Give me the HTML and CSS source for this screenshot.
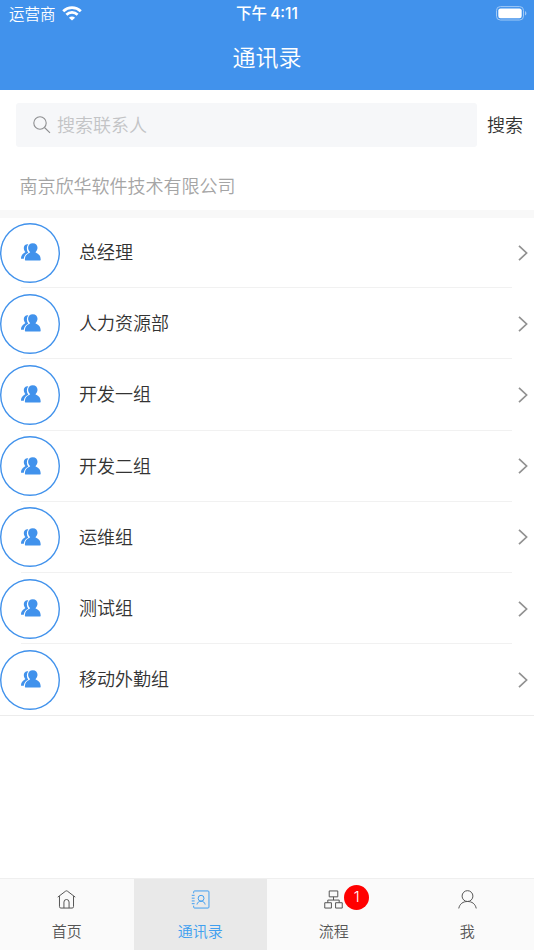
FILE: index.html
```html
<!DOCTYPE html>
<html lang="zh-CN">
<head>
    <meta charset="UTF-8">
    <meta name="viewport" content="width=device-width, initial-scale=1.0">
    <title>通讯录</title>
    <link rel="stylesheet" href="styles.css">
</head>
<body>
    <!-- 图标 -->
    <svg class="sprite">
        <symbol id="icon-group" viewBox="0 0 20 18">
            <path d="M7.300 1.300C4.300 1 2.700 2.900 2.800 5.200c.1 2 .9 3 1.600 3.900C3 10.700 0 11.200 0 15.700h2.800c.3-2.900 1.900-4.700 4.500-5.900C5.500 7.400 5.300 3.800 7.300 1.300z"/>
            <path d="M11.800.2c2.900 0 4.700 2 4.700 4.600 0 1.900-.9 3.500-2.100 4.400 1.900 1.300 5.300 2.100 5.300 7.600 0 .4-.2.600-.6.600H4.500c-.4 0-.6-.2-.6-.6 0-5.500 3.500-6.300 5.300-7.600C8 8.300 7.100 6.700 7.100 4.800c0-2.600 1.800-4.600 4.700-4.600z"/>
        </symbol>
        <symbol id="icon-arrow" viewBox="0 0 10 16">
            <path d="M1 .8 8.600 8 1 15.200"/>
        </symbol>
    </svg>

    <header class="cabecera">
        <div class="status-bar">
            <div class="carrier">
                <span>运营商</span>
                <svg class="wifi" width="20" height="15" viewBox="0 0 20 15">
                    <path d="M1.200 5.200C6.200.5 13.800.5 18.800 5.200M4.400 8.700c3.200-3 8-3 11.200 0"/>
                    <path class="dot" d="M10 14.600 6.900 11.700c1.700-1.600 4.500-1.600 6.200 0z"/>
                </svg>
            </div>
            <div class="time">下午 4:11</div>
            <div class="battery">
                <svg width="32" height="15" viewBox="0 0 32 15">
                    <rect class="case" x="1.500" y=".6" width="27" height="13.400" rx="3.800"/>
                    <rect class="level" x="3.300" y="2.400" width="23.400" height="9.800" rx="2.200"/>
                    <path class="tip" d="M30 5c1.900.8 1.900 3.800 0 4.600z"/>
                </svg>
            </div>
        </div>
        <h1 class="title">通讯录</h1>
    </header>

    <main class="content">
        <div class="search">
            <div class="search-box">
                <svg width="18" height="18" viewBox="0 0 18 18">
                    <circle cx="7" cy="7" r="6.200"/>
                    <path d="m11.500 11.500 5.500 5.300"/>
                </svg>
                <span>搜索联系人</span>
            </div>
            <div class="search-btn">搜索</div>
        </div>
        <div class="company">南京欣华软件技术有限公司</div>

        <ul class="list">
            <li class="item">
                <div class="avatar"><svg><use href="#icon-group"/></svg></div>
                <span class="name">总经理</span>
                <svg class="arrow"><use href="#icon-arrow"/></svg>
            </li>
            <li class="item">
                <div class="avatar"><svg><use href="#icon-group"/></svg></div>
                <span class="name">人力资源部</span>
                <svg class="arrow"><use href="#icon-arrow"/></svg>
            </li>
            <li class="item">
                <div class="avatar"><svg><use href="#icon-group"/></svg></div>
                <span class="name">开发一组</span>
                <svg class="arrow"><use href="#icon-arrow"/></svg>
            </li>
            <li class="item">
                <div class="avatar"><svg><use href="#icon-group"/></svg></div>
                <span class="name">开发二组</span>
                <svg class="arrow"><use href="#icon-arrow"/></svg>
            </li>
            <li class="item">
                <div class="avatar"><svg><use href="#icon-group"/></svg></div>
                <span class="name">运维组</span>
                <svg class="arrow"><use href="#icon-arrow"/></svg>
            </li>
            <li class="item">
                <div class="avatar"><svg><use href="#icon-group"/></svg></div>
                <span class="name">测试组</span>
                <svg class="arrow"><use href="#icon-arrow"/></svg>
            </li>
            <li class="item">
                <div class="avatar"><svg><use href="#icon-group"/></svg></div>
                <span class="name">移动外勤组</span>
                <svg class="arrow"><use href="#icon-arrow"/></svg>
            </li>
        </ul>
    </main>

    <!-- 底部导航 -->
    <nav class="tabs">
        <div class="tab">
            <svg viewBox="0 0 20 20">
                <path d="M.8 7.500 8.900 1.300q1.100-.8 2.200 0l8.100 6.200M2.600 6.400v11.100q0 1.500 1.500 1.500h11.800q1.500 0 1.500-1.500V6.400M7.300 19v-6.300a2.700 2.700 0 0 1 5.400 0V19"/>
            </svg>
            <span>首页</span>
        </div>
        <div class="tab active">
            <svg viewBox="0 0 20 20">
                <path d="M2.800 3.500V2q0-1 1-1h14.100q1 0 1 1v16q0 1-1 1H3.800q-1 0-1-1v-1.500M.8 5.600h3M.8 8.600h3M.8 11.500h3M.8 14.400h3"/>
                <circle cx="10.600" cy="8.700" r="3.100"/>
                <path d="M6.300 15.300c.4-2.200 2-3.500 4.300-3.500s3.900 1.300 4.300 3.500"/>
            </svg>
            <span>通讯录</span>
        </div>
        <div class="tab">
            <div class="icon-wrap">
                <svg viewBox="0 0 20 20">
                    <path d="M5.500 1h9v6.200h-9zM10 7.200v3.400M4 13.400v-2.800h12v2.800M.8 13.400h7V19h-7zM12.200 13.400h7V19h-7z"/>
                </svg>
                <span class="badge">1</span>
            </div>
            <span>流程</span>
        </div>
        <div class="tab">
            <svg viewBox="0 0 20 20">
                <circle cx="10" cy="6.400" r="5.700"/>
                <path d="M.8 19.400C1.800 14.500 5.300 12.100 10 12.100s8.200 2.400 9.200 7.300"/>
            </svg>
            <span>我</span>
        </div>
    </nav>
</body>
</html>
```
FILE: styles.css
```css
* {
    box-sizing: border-box;
}
body {
    margin: 0;
    height: 950px;
    display: flex;
    flex-direction: column;
    font-family: "Noto Sans CJK SC", sans-serif;
    font-weight: 350;
    background-color: #fff;
    color: #333;
    overflow: hidden;
}
.sprite {
    display: none;
}

/* Cabecera */
.cabecera {
    height: 90px;
    background-color: #4192ec;
    color: #fff;
}
.status-bar {
    height: 27px;
    display: grid;
    grid-template-columns: 1fr auto 1fr;
    align-items: center;
    padding: 0 7px 0 9px;
    font-size: 15.500px;
    line-height: 27px;
}
.carrier {
    display: flex;
    align-items: center;
    gap: 6px;
}
.wifi {
    fill: none;
    stroke: #fff;
    stroke-width: 2.800;
}
.wifi .dot {
    fill: #fff;
    stroke: none;
}
.time {
    margin-right: 2px;
    font-family: Inter, "Noto Sans CJK SC", sans-serif;
    font-size: 15.500px;
    font-weight: 500;
    word-spacing: -1px;
}
.battery {
    display: flex;
    justify-content: flex-end;
}
.battery .case {
    fill: none;
    stroke: #a0c9f6;
}
.battery .level {
    fill: #fff;
}
.battery .tip {
    fill: #a0c9f6;
}
.title {
    margin: 0;
    padding-top: 12px;
    font-size: 23px;
    font-weight: 350;
    line-height: 34px;
    text-align: center;
}

/* Buscador */
.content {
    flex: 1;
}
.search {
    display: flex;
    align-items: center;
    padding: 13px 11px 0 16px;
}
.search-box {
    flex: 1;
    height: 44px;
    display: flex;
    align-items: center;
    gap: 6px;
    padding-left: 17px;
    border-radius: 3px;
    background-color: #f6f7f9;
    color: #c3c4c6;
    font-size: 18px;
}
.search-box span {
    padding-bottom: 2px;
}
.search-box svg {
    fill: none;
    stroke: #8d8e90;
    stroke-width: 1.100;
}
.search-btn {
    margin-left: 10px;
    padding-bottom: 3px;
    font-size: 18px;
}
.company {
    height: 63px;
    padding: 25px 19.500px 0;
    font-size: 18px;
    line-height: 27px;
    color: #a5a5a5;
}

/* Lista */
.list {
    margin: 0;
    padding: 0;
    list-style: none;
    border-top: 8px solid #f8f8f8;
    border-bottom: 1px solid #ececec;
}
.item {
    height: 71.200px;
    display: flex;
    align-items: center;
    padding: 0 6px 2px 0;
    background: linear-gradient(#f1f1f1, #f1f1f1) 21px calc(100% - 1px) / 491px 1px no-repeat;
}
.item:last-child {
    height: 69.500px;
    padding-bottom: 0;
    background: none;
}
.avatar {
    width: 60px;
    height: 60px;
    display: flex;
    align-items: center;
    justify-content: center;
    box-shadow: inset 0 0 0 1.400px #4192ec;
    border-radius: 50%;
}
.avatar svg {
    width: 20px;
    height: 18px;
    margin: -1px 0 0 1px;
    fill: #4192ec;
}
.name {
    flex: 1;
    margin-left: 19px;
    padding-bottom: 3px;
    font-size: 18px;
}
.arrow {
    width: 10px;
    height: 16px;
    fill: none;
    stroke: #919191;
    stroke-width: 1.700;
}

/* Navegación inferior */
.tabs {
    height: 72px;
    display: flex;
    border-top: 1px solid #efefef;
    background-color: #fafafa;
}
.tab {
    flex: 1;
    display: flex;
    flex-direction: column;
    align-items: center;
    padding-top: 11px;
    color: #555;
    font-size: 15px;
    line-height: 24px;
}
.tab svg {
    display: block;
    width: 19px;
    height: 19px;
    margin-bottom: 10px;
    fill: none;
    stroke: currentColor;
    stroke-width: 1.050;
}
.tab.active {
    background-color: #e9e9e9;
    color: #409ff0;
}
.icon-wrap {
    position: relative;
}
.badge {
    position: absolute;
    top: -5px;
    left: 20px;
    width: 25px;
    height: 25px;
    border-radius: 50%;
    background-color: #f00;
    color: #fff;
    font-family: Inter, sans-serif;
    font-weight: 300;
    text-align: center;
}
```
